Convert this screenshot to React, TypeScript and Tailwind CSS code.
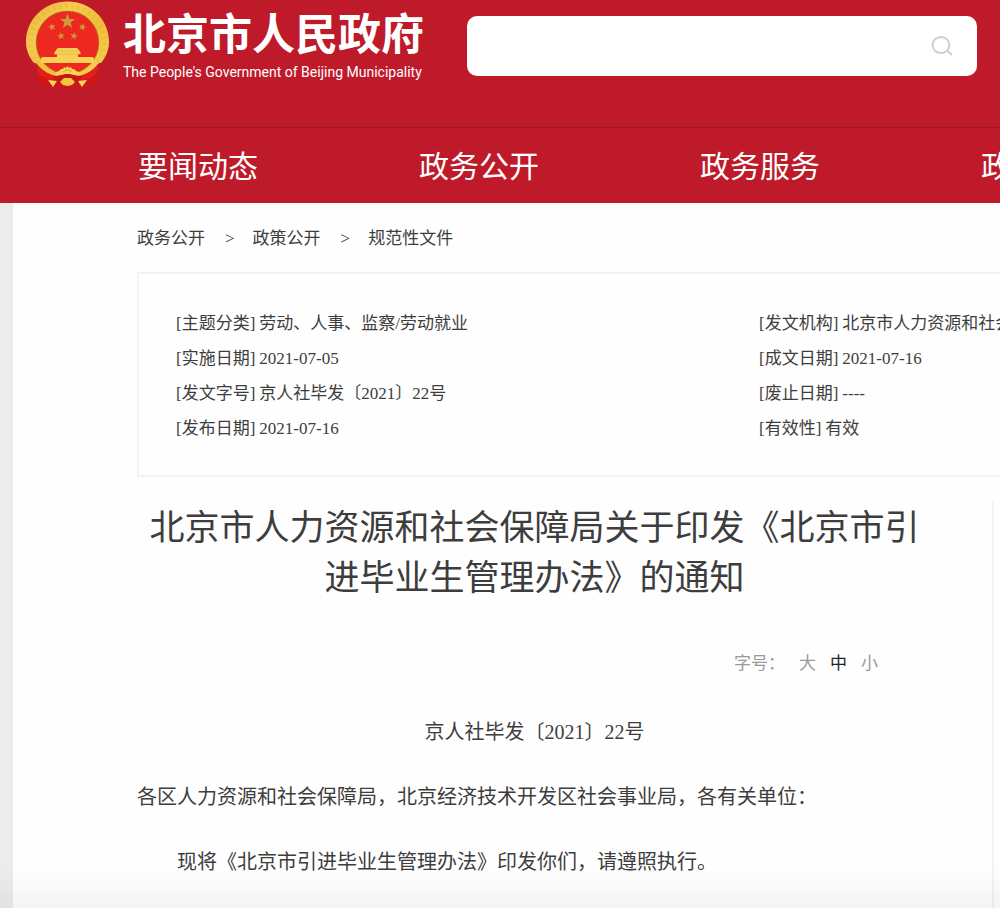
const navItems = ["要闻动态", "政务公开", "政务服务", "政民互动"]

const breadcrumbs = ["政务公开", "政策公开", "规范性文件"]

const details = [
    { label: "主题分类", value: "劳动、人事、监察/劳动就业" },
    { label: "发文机构", value: "北京市人力资源和社会保障局" },
    { label: "实施日期", value: "2021-07-05" },
    { label: "成文日期", value: "2021-07-16" },
    { label: "发文字号", value: "京人社毕发〔2021〕22号" },
    { label: "废止日期", value: "----" },
    { label: "发布日期", value: "2021-07-16" },
    { label: "有效性", value: "有效" },
]

const sizes = ["大", "中", "小"]

export default function App() {
    return (
        <div
            lang="zh-CN"
            className="min-h-screen overflow-x-hidden bg-[#ececec] font-['Liberation_Serif','Noto_Sans_CJK_SC',serif] text-[#3d3d3d]"
        >
            <Header />
            <main className="ml-[13px] min-h-[705px] bg-[#fefefe] pl-[124px]">
                <Breadcrumbs />
                <Details />
                <div className="mt-6 flex min-h-[407px]">
                    <Article />
                    <aside className="w-2 shrink-0 border-l-2 border-[#f3f3ec]" />
                </div>
            </main>
            <div className="pointer-events-none fixed inset-x-0 bottom-0 h-10 bg-linear-to-b from-transparent to-black/4" />
        </div>
    )
}

function Header() {
    return (
        <header className="bg-[#be1a2a] text-white">
            <div className="flex h-32 items-start border-b border-[#99152a] pl-6 pr-[23px]">
                <a href="#" className="flex shrink-0">
                    <Emblem />
                    <span className="ml-3 whitespace-nowrap pt-1.5 font-['Noto_Sans_CJK_SC',sans-serif]">
                        <span className="block text-[43px] font-bold leading-[50px]">
                            北京市人民政府
                        </span>
                        <span className="block font-['Roboto',sans-serif] text-sm leading-8">
                            The People's Government of Beijing Municipality
                        </span>
                    </span>
                </a>
                <form className="ml-auto mt-4 flex h-15 w-[510px] items-center rounded-[10px] bg-white">
                    <input
                        type="search"
                        aria-label="搜索"
                        className="h-full min-w-0 flex-1 rounded-[10px] px-5 text-xl text-[#3d3d3d] outline-none"
                    />
                    <button type="submit" aria-label="搜索" className="mr-6 shrink-0">
                        <svg
                            viewBox="0 0 22 22"
                            className="h-[22px] w-[22px]"
                            fill="none"
                            stroke="#cfcfcf"
                            strokeWidth="2"
                        >
                            <ellipse cx="10" cy="10" rx="8.4" ry="8" />
                            <path d="M16 15.4 L21 20" />
                        </svg>
                    </button>
                </form>
            </div>
            <nav className="flex h-[75px] items-center overflow-hidden pl-[138px] pt-0.5">
                {navItems.map((item) => (
                    <a
                        key={item}
                        href="#"
                        className="w-[281px] shrink-0 whitespace-nowrap text-3xl leading-10"
                    >
                        {item}
                    </a>
                ))}
            </nav>
        </header>
    )
}

function Breadcrumbs() {
    return (
        <nav className="flex h-[69px] items-center gap-5 pt-0.5 text-[17px]">
            {breadcrumbs.map((item, i) => (
                <span key={item} className="flex gap-[18px]">
                    {i > 0 && <span>&gt;</span>}
                    <a href="#">{item}</a>
                </span>
            ))}
        </nav>
    )
}

function Details() {
    return (
        <dl className="grid h-[205px] grid-cols-[583px_1fr] content-start overflow-hidden border-y-2 border-l-2 border-[#f3f3ec] pl-[37px] pt-8 text-[17px] leading-[35px]">
            {details.map(({ label, value }) => (
                <div key={label} className="flex gap-1 whitespace-nowrap">
                    <dt>[{label}]</dt>
                    <dd>{value}</dd>
                </div>
            ))}
        </dl>
    )
}

function Article() {
    return (
        <article className="min-w-0 flex-1 pr-[60px] pt-[3px]">
            <h1 className="text-center text-[35px] leading-[50px]">
                北京市人力资源和社会保障局关于印发《北京市引
                <br />
                进毕业生管理办法》的通知
            </h1>
            <div className="mt-10 flex h-10 items-center justify-end gap-3.5 pr-[54px] text-[17px] text-[#999]">
                <span>字号：</span>
                {sizes.map((size) => (
                    <button key={size} type="button" className={size === "中" ? "text-[#222]" : ""}>
                        {size}
                    </button>
                ))}
            </div>
            <div className="mt-4 text-xl leading-[65px]">
                <p className="text-center">京人社毕发〔2021〕22号</p>
                <p className="whitespace-nowrap">
                    各区人力资源和社会保障局，北京经济技术开发区社会事业局，各有关单位：
                </p>
                <p className="indent-[2em]">
                    现将《北京市引进毕业生管理办法》印发你们，请遵照执行。
                </p>
            </div>
        </article>
    )
}

function Star({ x, y, size, turn = 0 }: { x: number; y: number; size: number; turn?: number }) {
    return (
        <path
            transform={`translate(${x} ${y}) rotate(${turn}) scale(${size})`}
            d="M0 -1 L.24 -.32 L.95 -.31 L.38 .12 L.59 .81 L0 .4 L-.59 .81 L-.38 .12 L-.95 -.31 L-.24 -.32Z"
            fill="#cf9a35"
        />
    )
}

function Emblem() {
    return (
        <svg viewBox="24 0 87 90" className="h-[90px] w-[87px]" role="img" aria-label="国徽">
            <defs>
                <linearGradient id="gold" x1="0" y1="0" x2="1" y2="1">
                    <stop offset="0" stopColor="#e6ac35" />
                    <stop offset=".3" stopColor="#f4cd50" />
                    <stop offset=".6" stopColor="#f0bd3c" />
                    <stop offset="1" stopColor="#f6d65a" />
                </linearGradient>
            </defs>
            {/* red drapery behind the ring */}
            <path
                d="M38 63 H97 L99 68 L97 75 L99 82 L90 86 L83 88 L75 86 L67 89 L59 86 L52 88 L45 86 L36 82 L38 75 L36 68Z"
                fill="#cf1518"
            />
            <path
                d="M67.5 1.5 C90.5 1.5 109 19 109 42 C109 50 106 57 101 63 L99 63 C95 69 85 76 79 77 H56 C50 76 40 69 36 63 L34 63 C29 57 26 50 26 42 C26 19 44.5 1.5 67.5 1.5Z"
                fill="url(#gold)"
            />
            {/* wheat ears around the ring */}
            <path
                d="M37 64 A37 37 0 1 1 98 64"
                fill="none"
                stroke="#d69b25"
                strokeWidth="5"
                strokeDasharray="2 4"
                opacity=".2"
            />
            <circle cx="67.5" cy="42.5" r="31.8" fill="#b77a18" />
            <circle cx="67.5" cy="42.5" r="31" fill="#ec2821" />
            <Star x={67.5} y={21.5} size={8} />
            <Star x={52} y={27} size={4} turn={-15} />
            <Star x={82.5} y={27} size={4} turn={15} />
            <Star x={61} y={36} size={4} turn={-10} />
            <Star x={74} y={36} size={4} turn={10} />
            {/* gate tower */}
            <path
                d="M58 48 H77 L79 50 L81 54 H78 V57 H92 L94 58 V63 H41 V58 L43 57 H57 V54 H54 L56 50Z"
                fill="#f8d055"
            />
            <path d="M57 51 H78 M55 54 H80" stroke="#f0b23f" strokeWidth=".8" />
            {/* cog wheel */}
            <path
                d="M55 76 L56 72 L59 71 L61 69 L63 69 L64 67 L66 68 L67.5 66 L69 68 L71 67 L72 69 L74 69 L76 71 L79 72 L80 76Z"
                fill="#f7d253"
            />
            <path d="M63 72 Q67.5 68 72 72" fill="none" stroke="#d99b2b" strokeWidth=".8" />
            {/* ribbons */}
            <path d="M37 64 C42 71 50 75 57 76 L55 81 C46 80 38 75 37 70Z" fill="#e01f1b" />
            <path d="M98 64 C93 71 85 75 78 76 L80 81 C89 80 97 75 98 70Z" fill="#e01f1b" />
            <path d="M53 76 C60 76 63 74 67.5 74 C72 74 75 76 82 76 L79 83 H56Z" fill="#c61718" />
            <path d="M48 80 L57 81 L53 87Z M87 80 L78 81 L82 87Z" fill="#f7d75c" />
            <path d="M60 82 L64 78 H71 L75 82 L72 85 L67.5 86 L63 85Z" fill="#f2c746" />
        </svg>
    )
}
